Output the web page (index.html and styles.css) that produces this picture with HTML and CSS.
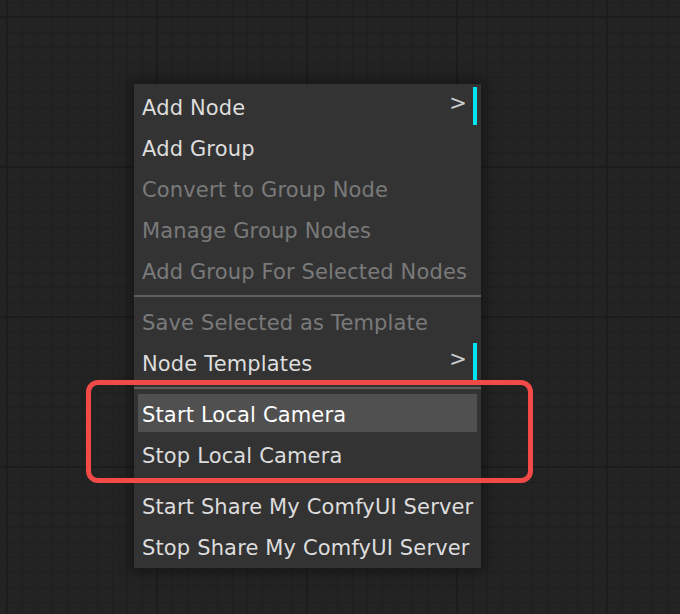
FILE: index.html
```html
<!DOCTYPE html>
<html>
<head>
<meta charset="utf-8">
<link rel="stylesheet" href="styles.css">
</head>
<body>
<div class="canvas">
  <div class="menu">
    <div class="entry submenu">Add Node</div>
    <div class="entry">Add Group</div>
    <div class="entry disabled">Convert to Group Node</div>
    <div class="entry disabled">Manage Group Nodes</div>
    <div class="entry disabled">Add Group For Selected Nodes</div>
    <div class="separator"></div>
    <div class="entry disabled">Save Selected as Template</div>
    <div class="entry submenu">Node Templates</div>
    <div class="separator"></div>
    <div class="entry hover">Start Local Camera</div>
    <div class="entry">Stop Local Camera</div>
    <div class="separator"></div>
    <div class="entry">Start Share My ComfyUI Server</div>
    <div class="entry">Stop Share My ComfyUI Server</div>
  </div>
  <div class="highlight-box"></div>
</div>
</body>
</html>
```

FILE: styles.css
```css
html, body {
  margin: 0;
  padding: 0;
  width: 680px;
  height: 614px;
  overflow: hidden;
  background: #222222;
}
.canvas {
  position: relative;
  width: 680px;
  height: 614px;
  background-color: #232323;
  background-image:
    linear-gradient(to right, #1c1c1c 0, #1c1c1c 2px, transparent 2px),
    linear-gradient(to bottom, #1c1c1c 0, #1c1c1c 2px, transparent 2px),
    linear-gradient(to right, #1f1f1f 0, #1f1f1f 1px, transparent 1px),
    linear-gradient(to bottom, #1f1f1f 0, #1f1f1f 1px, transparent 1px);
  background-size: 150px 150px, 150px 150px, 15px 15px, 15px 15px;
  background-position: 156px 0, 0 16px, 7px 0, 0 2px;
  padding: 84px 0 0 134px;
  box-sizing: border-box;
  font-family: "DejaVu Sans", "Noto Sans", sans-serif;
}
.menu {
  width: 347px;
  background: #333333;
  padding: 3px 0 3px;
  box-sizing: border-box;
  box-shadow: 0 0 12px 4px rgba(0, 0, 0, 0.35);
}
.entry {
  position: relative;
  height: 38px;
  margin: 0 4px 3px;
  padding-left: 4px;
  padding-top: 4px;
  font-size: 21px;
  letter-spacing: 0.15px;
  line-height: 34px;
  color: #dddddd;
  white-space: nowrap;
  box-sizing: border-box;
}
.entry:last-child {
  margin-bottom: 0;
}
.entry.disabled {
  color: #7a7a7a;
}
.entry.hover {
  background: #505050;
  color: #ffffff;
}
.entry.submenu {
  border-right: 4px solid #00e5f0;
}
.entry.submenu::after {
  content: ">";
  position: absolute;
  right: 6px;
  top: -1px;
  color: #cccccc;
}
.separator {
  height: 2px;
  background: #5e5e5e;
  margin: 6px 0 5px;
}
.highlight-box {
  position: absolute;
  left: 86px;
  top: 380px;
  width: 447px;
  height: 103px;
  border: 5px solid #f24b47;
  border-radius: 12px;
  box-sizing: border-box;
}
```
